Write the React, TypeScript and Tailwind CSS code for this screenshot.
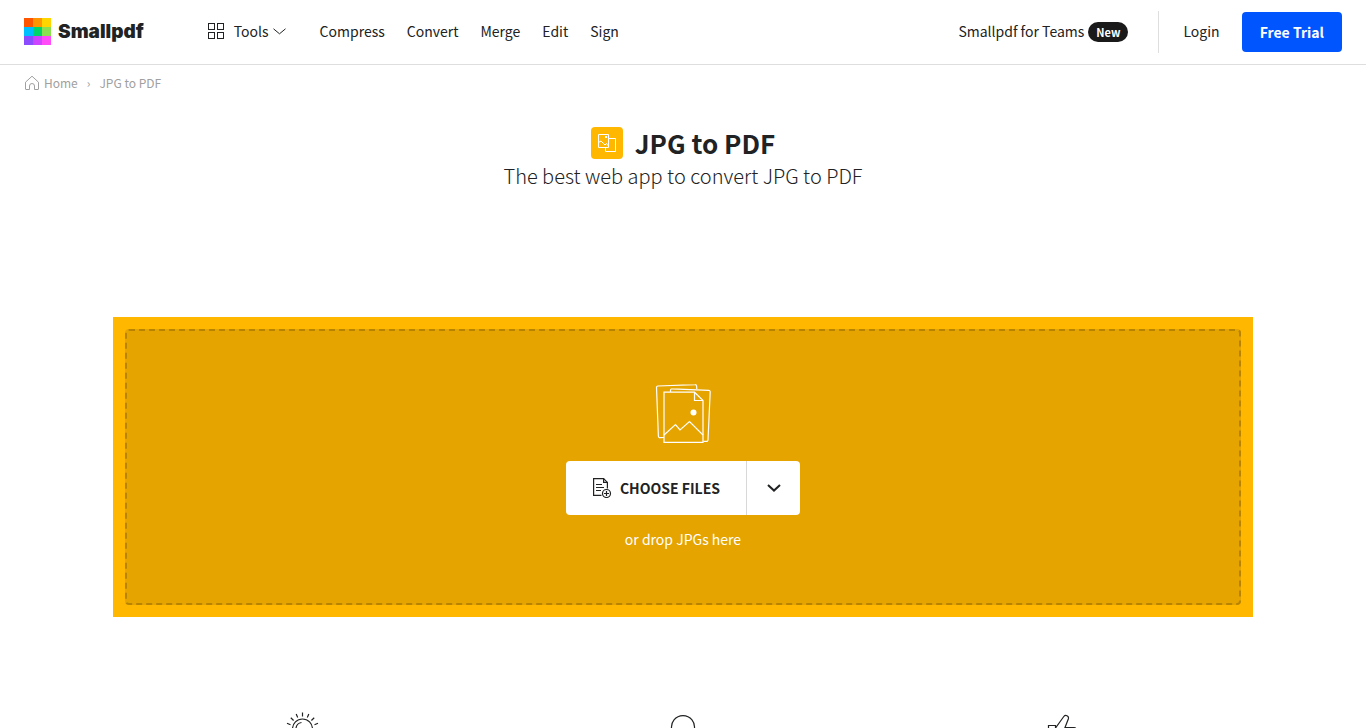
const LOGO_COLORS = [
  "#ff5500",
  "#ff9500",
  "#ffd500",
  "#00bfff",
  "#00d46a",
  "#8be050",
  "#8c4bff",
  "#cc44ff",
  "#ff4bf8",
];

const NAV_LINKS = ["Compress", "Convert", "Merge", "Edit", "Sign"];

function Logo() {
  return (
    <a href="#" className="flex items-center gap-[7px]">
      <svg width="27" height="27" viewBox="0 0 27 27" shapeRendering="crispEdges" aria-hidden="true">
        {LOGO_COLORS.map((color, i) => (
          <rect key={color} x={(i % 3) * 9} y={Math.floor(i / 3) * 9} width="9" height="9" fill={color} />
        ))}
      </svg>
      <span className="pt-0.5 font-['Inter',sans-serif] text-[19px] leading-6 font-black">Smallpdf</span>
    </a>
  );
}

function GridIcon() {
  return (
    <svg width="16" height="16" viewBox="0 0 16 16" fill="none" stroke="currentColor" aria-hidden="true">
      <rect x="0.5" y="0.5" width="6" height="6" />
      <rect x="9.5" y="0.5" width="6" height="6" />
      <rect x="0.5" y="9.5" width="6" height="6" />
      <rect x="9.5" y="9.5" width="6" height="6" />
    </svg>
  );
}

function HomeIcon() {
  return (
    <svg width="16" height="16" viewBox="0 0 16 16" fill="none" stroke="currentColor" aria-hidden="true">
      <path d="M1.500 7.200 8 1.200l6.500 6v6.800a.5.5 0 0 1-.5.5h-3.500v-3.500a2.500 2.500 0 0 0-5 0v3.500H2a.5.5 0 0 1-.5-.5z" />
    </svg>
  );
}

function ConvertIcon() {
  return (
    <span className="flex size-8 items-center justify-center rounded bg-[#ffb700]">
      <svg width="18" height="18" viewBox="0 0 18 18" fill="none" stroke="#fff" aria-hidden="true">
        <path d="M.5.5h10v13H.5z" />
        <path d="M10.500 4.500h7v13h-10v-4" />
        <path d="M.5 8.500 3 7l4 4 1.500-1.500L10.500 12" />
        <rect x="7" y="2" width="2" height="2" fill="#fff" stroke="none" />
      </svg>
    </span>
  );
}

function PicturesIcon() {
  return (
    <svg width="56" height="60" viewBox="0 0 56 60" fill="none" stroke="#fff" strokeWidth="1.200" aria-hidden="true">
      <path d="M8.800 53.500 5 53.700a1.500 1.500 0 0 1-1.600-1.400L1.500 3.500A1.500 1.500 0 0 1 2.900 2L40 .7A1.500 1.500 0 0 1 41.600 2l.2 3" />
      <path d="M15.500 8V6.200a1.500 1.500 0 0 1 1.600-1.400L53.800 6.400a1.500 1.500 0 0 1 1.400 1.600L53 56a1.500 1.500 0 0 1-1.600 1.400l-3-.1" />
      <path d="M9 8.200h30.500l8.500 8.300v41.900H9z" />
      <path d="M39.500 8.200v8.300H48" />
      <path d="m9 51 11.500-10.500 4.500 5.500 9.500-8.500L48 51" />
      <circle cx="38.500" cy="28.500" r="3" fill="#fff" stroke="none" />
    </svg>
  );
}

function AddFileIcon() {
  return (
    <svg width="20" height="20" viewBox="0 0 20 20" fill="none" stroke="currentColor" strokeWidth="1.200" aria-hidden="true">
      <path d="M9.500 17.400H1.600V.6h10l3.800 3.800v6" />
      <path d="M11.600.6v3.800h3.800M4 6.500h6M4 9.500h8M4 12.500h5" />
      <circle cx="14.500" cy="15.500" r="4" />
      <path d="M14.500 13v5M12 15.500h5" />
    </svg>
  );
}

function SunIcon() {
  return (
    <svg width="34" height="34" viewBox="0 0 34 34" fill="none" stroke="currentColor" strokeWidth="1.200" aria-hidden="true">
      <circle cx="16.500" cy="17" r="10" />
      <path d="M10 16a6.500 6.500 0 0 1 5.500-5.500" />
      <path d="M16.500.5v4M10.200 2l1.500 3.500M22.800 2l-1.500 3.500M4.800 5.800l2.800 2.700M28.200 5.800l-2.800 2.700M1 11.300l3.500 1.500M32 11.300l-3.500 1.500" />
      <path d="M.5 17.500h3M30 17.500h3M16.500 30v3M5.500 28l2-2M27.500 28l-2-2" />
    </svg>
  );
}

function BulbIcon() {
  return (
    <svg width="34" height="34" viewBox="0 0 34 34" fill="none" stroke="currentColor" strokeWidth="1.200" aria-hidden="true">
      <path d="M12 29v-3.500a11.500 11.500 0 1 1 10 0V29zM13 32h8" />
    </svg>
  );
}

function ThumbIcon() {
  return (
    <svg width="34" height="34" viewBox="0 0 34 34" fill="none" stroke="currentColor" strokeWidth="1.200" aria-hidden="true">
      <path d="M2.500 13.500h7V30h-7z" />
      <path d="M9.500 16 17.800 4.500a2.600 2.600 0 0 1 4.600 2.200L19 15.500h9a2 2 0 0 1 0 4h-1.500L25 29H10" />
    </svg>
  );
}

function Header() {
  return (
    <header className="flex h-[65px] items-center justify-between border-b border-[#dedede] px-6 text-sm">
      <div className="flex items-center pb-0.5">
        <Logo />
        <nav className="ml-16 flex items-center gap-[22px] leading-6">
          <button type="button" className="mr-3 flex items-center">
            <GridIcon />
            <span className="ml-[10px]">Tools</span>
            <svg className="ml-1" width="13" height="7" viewBox="0 0 13 7" fill="none" stroke="currentColor" aria-hidden="true">
              <path d="m.5.8 6 5 6-5" />
            </svg>
          </button>
          {NAV_LINKS.map((link) => (
            <a key={link} href="#">
              {link}
            </a>
          ))}
        </nav>
      </div>
      <div className="flex items-center">
        <a href="#" className="flex items-center gap-1">
          <span className="pb-0.5">Smallpdf for Teams</span>
          <span className="rounded-full bg-[#1a1a1a] px-2 text-[11px] leading-5 font-bold text-white">New</span>
        </a>
        <a href="#" className="ml-[30px] border-l border-[#dedede] pr-[22px] pb-0.5 pl-6 leading-10">
          Login
        </a>
        <button type="button" className="h-10 rounded bg-[#0055ff] px-[18px] text-sm font-bold text-white">
          Free Trial
        </button>
      </div>
    </header>
  );
}

export default function App() {
  return (
    <div className="h-screen overflow-hidden bg-white font-['Noto_Sans_CJK_SC',sans-serif] text-[#202223]">
      <Header />

      <nav aria-label="Breadcrumb" className="flex h-9 items-center px-6 text-xs text-[#a0a0a0]">
        <a href="#" className="flex items-center gap-1">
          <HomeIcon />
          Home
        </a>
        <span className="mx-[9px]">›</span>
        <span>JPG to PDF</span>
      </nav>

      <main>
        <div className="flex flex-col items-center pt-[26px]">
          <div className="flex items-center gap-3">
            <ConvertIcon />
            <h1 className="text-[26px] leading-8 font-bold">JPG to PDF</h1>
          </div>
          <p className="mt-[3px] text-xl leading-7 font-light">The best web app to convert JPG to PDF</p>
        </div>

        <section className="mx-auto mt-[127px] max-w-[1140px] bg-[#ffb700] p-3">
          <div className="flex h-[276px] flex-col items-center rounded border-2 border-dashed border-[#b78300] bg-[#e5a400] pt-[53px]">
            <PicturesIcon />
            <div className="mt-[17px] flex h-[54px] rounded bg-white">
              <button type="button" className="flex items-center gap-2 px-[26px] text-sm font-bold">
                <AddFileIcon />
                CHOOSE FILES
              </button>
              <button
                type="button"
                aria-label="More sources"
                className="flex w-[54px] items-center justify-center border-l border-[#d8d8d8]"
              >
                <svg width="14" height="8" viewBox="0 0 14 8" fill="none" stroke="currentColor" strokeWidth="2" aria-hidden="true">
                  <path d="m1 1 6 5.600L13 1" />
                </svg>
              </button>
            </div>
            <p className="mt-3 text-sm leading-6 text-white">or drop JPGs here</p>
          </div>
        </section>

        <section className="mx-auto mt-[95px] grid max-w-[1140px] grid-cols-3 justify-items-center">
          <SunIcon />
          <BulbIcon />
          <ThumbIcon />
        </section>
      </main>
    </div>
  );
}
